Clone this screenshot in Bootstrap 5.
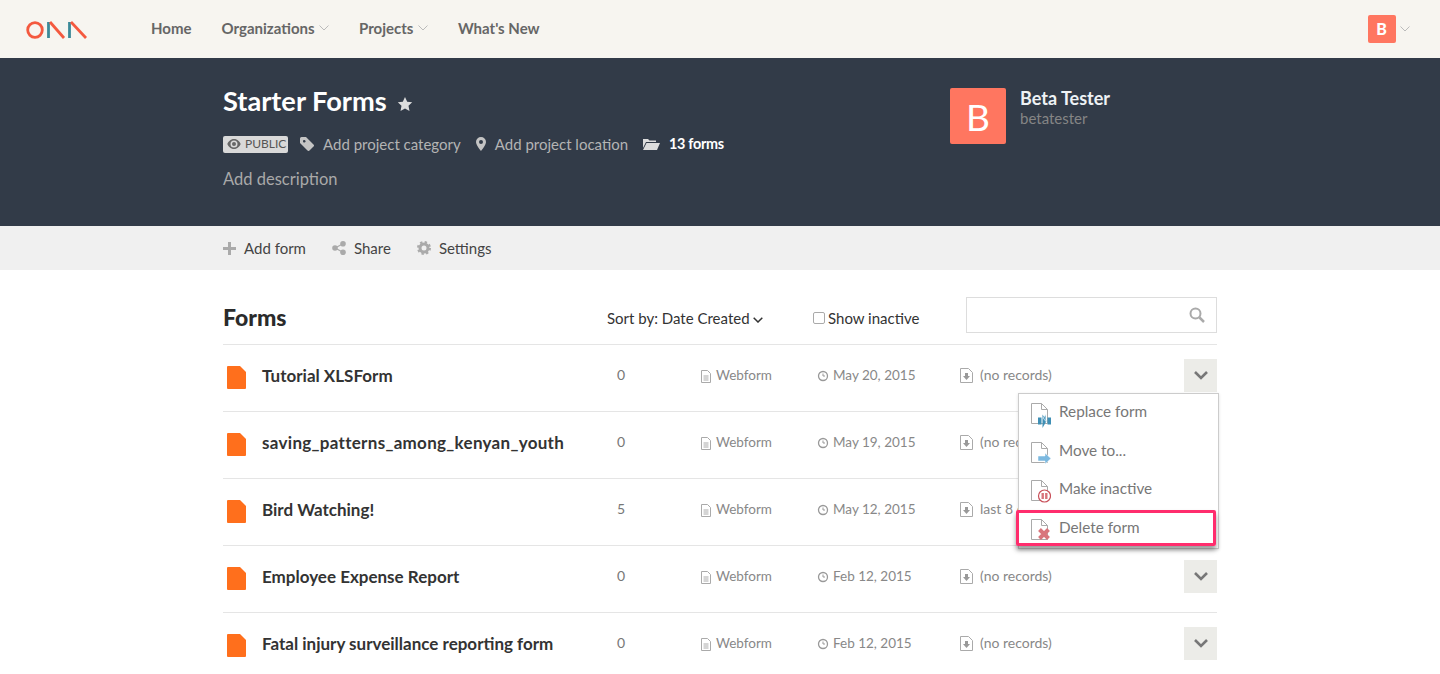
<!doctype html>
<html lang="en"><head><meta charset="utf-8"><title>Starter Forms</title>
<link href="https://cdn.jsdelivr.net/npm/bootstrap@5.3.0/dist/css/bootstrap.min.css" rel="stylesheet">
<style>
html,body{height:674px;overflow:hidden}
body{font-family:Lato,"Open Sans",sans-serif;font-size:15px;color:#333;background:#fff}
a{text-decoration:none;color:inherit}
.topbar{height:58px;background:#f7f5f0;padding:0 30px 0 26px}
.brandmark{width:62px;margin-right:63px;display:block}
.toplink{font-weight:700;font-size:15px;color:#666;margin-right:30px;padding-bottom:1px}
.caretsvg{margin-left:4.5px;vertical-align:3px}
.tinyavatar{width:28px;height:28px;background:#ff7660;color:#fff;font-weight:900;font-size:16px;border-radius:2px}
.hero{height:168px;background:#323b48}
.inner{width:994px;margin:0 auto}
.herotitle{font-size:27.2px;font-weight:700;color:#fff;line-height:32px;margin:0;padding-top:27px}
.herometa{margin-top:17px;font-size:15px;color:#b4b4b4;height:20px}
.pubtag{background:#d9d9d9;color:#555;font-size:12px;height:17px;width:65px;border-radius:2px;margin-right:12px;padding-left:4px}
.metaitem{margin-right:15px}
.metaitem svg{margin-right:9px}
.formcount{font-size:14.4px;letter-spacing:-.3px}
.herodesc{margin-top:13px;font-size:16.5px;color:#a9a9a9;line-height:24px}
.owner{width:267px;padding-top:30px}
.bigavatar{width:56px;height:56px;background:#ff7660;color:#fff;font-size:37px;border-radius:2px;margin-right:14px;line-height:1}
.ownername{font-size:18px;font-weight:700;color:#eef2f5;line-height:22px;margin-top:-1px}
.ownerhandle{font-size:15px;color:#858585;line-height:20px;margin-top:-1px}
.subbar{height:44px;background:#f0f0f0;font-size:15px;color:#444}
.subitem{margin-right:26px}
.subitem svg{margin-right:8px}
.formshead{height:75px;border-bottom:1px solid #e5e5e5;padding-top:16px}
.headtext{padding-top:6px}
.formstitle{font-size:23px;font-weight:900;color:#2b2b2b;margin:0;width:384px}
.sortby{width:206px;color:#333;font-size:15px}
.showin{width:153px;font-size:15px;color:#333}
.chk{width:12px;height:12px;border:1px solid #aaa;border-radius:2px;background:#fff;margin-right:3px;display:inline-block}
.searchbox{width:251px;height:36px;border:1px solid #ddd;padding-right:11px}
.formrow{height:67px;border-bottom:1px solid #e5e5e5;color:#888;font-size:13.5px;padding-bottom:4px}
.colname{width:394px;font-size:17px;font-weight:700;color:#333;padding-left:4px}
.colname svg{margin-right:16px;margin-top:2px}
.widename{letter-spacing:.3px}
.colcount{width:83px;color:#777;font-size:14px;padding-bottom:4px}
.coltype{width:117px;padding-bottom:2px}
.coldate{width:143px;padding-bottom:2px}
.colrec{width:224px;font-size:14px;padding-bottom:4px}
.coltype svg,.coldate svg,.colrec svg{margin-right:4px}
.colrec svg{margin-right:7px}
.rowbtn{width:33px;height:33px;background:#ecece8;margin-bottom:2px}
.listarea{position:relative}
.rowmenu{position:absolute;left:795px;top:48px;width:201px;height:156px;background:#fff;border:1px solid #ccc;box-shadow:0 1px 3px rgba(0,0,0,.12)}
.menuitem{height:38.5px;padding-left:11px;font-size:15.3px;color:#777}
.menuitem svg{margin-right:8px}
.menulabel{padding-bottom:3px}
.menuhot{position:absolute;left:-3px;top:116px;width:200px;height:36px;border:3px solid #ff2d6d;border-radius:2px;box-shadow:0 4px 5px rgba(0,0,0,.4)}
</style></head><body>
<nav class="topbar d-flex align-items-center">
<svg class="brandmark" width="62" height="20" viewBox="0 0 62 20" fill="none" stroke-width="2.8"><circle cx="9" cy="11" r="7.300" stroke="#f4593f"/><path d="M22.500 3v16" stroke="#3b8a98"/><path d="M24 3l14 16" stroke="#f4593f"/><path d="M43.500 19V3" stroke="#3b8a98"/><path d="M45 3l15 16" stroke="#f4593f"/></svg>
<a class="toplink" href="#">Home</a>
<a class="toplink" href="#">Organizations<svg class="caretsvg" width="10" height="6" viewBox="0 0 10 6" fill="none" stroke="#bbb"><path d="M.5.5l4.500 4.500 4.500-4.500"/></svg></a>
<a class="toplink" href="#">Projects<svg class="caretsvg" width="10" height="6" viewBox="0 0 10 6" fill="none" stroke="#bbb"><path d="M.5.5l4.500 4.500 4.500-4.500"/></svg></a>
<a class="toplink" href="#">What's New</a>
<div class="ms-auto d-flex align-items-center"><span class="tinyavatar d-flex align-items-center justify-content-center">B</span><svg class="caretsvg" width="10" height="6" viewBox="0 0 10 6" fill="none" stroke="#bbb"><path d="M.5.5l4.500 4.500 4.500-4.500"/></svg></div>
</nav>
<header class="hero"><div class="inner d-flex justify-content-between">
<div>
<h1 class="herotitle">Starter Forms <svg width="16" height="16" viewBox="0 0 16 16" fill="#ddd" class="ms-1"><path d="M8 1l2.200 4.700 5 .6-3.700 3.500 1 5.100L8 12.400 3.500 14.900l1-5.100L.8 6.300l5-.6z"/></svg></h1>
<div class="herometa d-flex align-items-center">
<span class="pubtag d-flex align-items-center"><svg width="14" height="10" viewBox="0 0 14 10" class="me-1"><path d="M7 0C3.500 0 1.200 2.800.3 5c.9 2.200 3.200 5 6.700 5s5.800-2.800 6.700-5C12.800 2.800 10.500 0 7 0zm0 8.500A3.500 3.500 0 1 1 7 1.500a3.500 3.500 0 0 1 0 7zM7 3a2 2 0 1 0 0 4 2 2 0 0 0 0-4z" fill="#666"/></svg>PUBLIC</span>
<span class="metaitem d-flex align-items-center"><svg width="14" height="14" viewBox="0 0 14 14" fill="#c4c4c4"><path d="M0 1.500A1.500 1.500 0 0 1 1.500 0H6l7.500 7.500a1.400 1.400 0 0 1 0 2L9.500 13.500a1.400 1.400 0 0 1-2 0L0 6zM3 4.300a1.300 1.300 0 1 0 0-.1z"/></svg>Add project category</span>
<span class="metaitem d-flex align-items-center"><svg width="10" height="14" viewBox="0 0 10 14" fill="#c4c4c4"><path d="M5 0a5 5 0 0 0-5 5c0 3 5 9 5 9s5-6 5-9a5 5 0 0 0-5-5zm0 7a2 2 0 1 1 0-4 2 2 0 0 1 0 4z"/></svg>Add project location</span>
<span class="metaitem formcount d-flex align-items-center text-white fw-bold"><svg width="17" height="12" viewBox="0 0 17 12" fill="#ddd"><path d="M0 1h5l1.500 1.500H13V4H3L0 10zM3.500 5H17l-3 7H0z"/></svg>13 forms</span>
</div>
<div class="herodesc">Add description</div>
</div>
<div class="owner d-flex"><span class="bigavatar d-flex align-items-center justify-content-center">B</span><div><div class="ownername">Beta Tester</div><div class="ownerhandle">betatester</div></div></div>
</div></header>
<div class="subbar"><div class="inner d-flex align-items-center h-100">
<a class="subitem d-flex align-items-center" href="#"><svg width="13" height="13" viewBox="0 0 13 13" fill="#aaa"><path d="M5 0h3v5h5v3H8v5H5V8H0V5h5z"/></svg>Add form</a>
<a class="subitem d-flex align-items-center" href="#"><svg width="14" height="14" viewBox="0 0 14 14"><g fill="#aaa"><circle cx="3" cy="7" r="2.800"/><circle cx="11" cy="2.800" r="2.800"/><circle cx="11" cy="11.200" r="2.800"/></g><path d="M3 7l8-4.200M3 7l8 4.200" stroke="#aaa" stroke-width="1.200"/></svg>Share</a>
<a class="subitem d-flex align-items-center" href="#"><svg width="14" height="14" viewBox="0 0 14 14" fill="none"><circle cx="7" cy="7" r="4" stroke="#aaa" stroke-width="3"/><circle cx="7" cy="7" r="5.800" stroke="#aaa" stroke-width="2.400" stroke-dasharray="2.300 2.250"/></svg>Settings</a>
</div></div>
<main class="inner">
<div class="formshead d-flex align-items-center">
<h2 class="formstitle headtext">Forms</h2>
<div class="sortby headtext">Sort by: Date Created <svg width="10" height="6" viewBox="0 0 10 6" fill="none" stroke="#333" stroke-width="1.500" class="ms-0"><path d="M.7.7L5 5l4.300-4.300"/></svg></div>
<div class="showin headtext d-flex align-items-center"><span class="chk"></span>Show inactive</div>
<div class="searchbox d-flex align-items-center justify-content-end"><svg width="16" height="16" viewBox="0 0 16 16" fill="none" stroke="#aaa" stroke-width="2"><circle cx="6.500" cy="6.500" r="5"/><path d="M10.500 10.500L15 15" stroke-width="2.500"/></svg></div>
</div>
<div class="listarea">
<div class="formrow d-flex align-items-center"><div class="colname d-flex align-items-center"><svg width="19" height="23" viewBox="0 0 19 23"><path d="M1 0h12l6 6v16a1 1 0 0 1-1 1H1a1 1 0 0 1-1-1V1a1 1 0 0 1 1-1z" fill="#ff6f1c"/></svg>Tutorial XLSForm</div><div class="colcount">0</div><div class="coltype"><svg width="12" height="13" viewBox="0 0 12 13" fill="none" stroke="#aaa"><path d="M1.500.5h6l3 3v9h-9zM3.500 6h5M3.500 8h5M3.500 10h5"/></svg>Webform</div><div class="coldate"><svg width="12" height="12" viewBox="0 0 12 12" fill="none" stroke="#999"><circle cx="6" cy="6" r="4.500" stroke-width="1.300"/><path d="M6 3.500V6h2"/></svg>May 20, 2015</div><div class="colrec"><svg width="13" height="15" viewBox="0 0 13 15" fill="none" stroke="#aaa"><path d="M.5.5h8l4 4v10H.5z"/><path d="M5 5h3v3h2l-3.500 4L3 8h2z" fill="#999" stroke="none"/></svg>(no records)</div><div class="rowbtn d-flex align-items-center justify-content-center"><svg width="14" height="9" viewBox="0 0 14 9" fill="none" stroke="#777" stroke-width="2.600"><path d="M1 1l6 6 6-6"/></svg></div></div>
<div class="formrow d-flex align-items-center"><div class="colname d-flex align-items-center"><svg width="19" height="23" viewBox="0 0 19 23"><path d="M1 0h12l6 6v16a1 1 0 0 1-1 1H1a1 1 0 0 1-1-1V1a1 1 0 0 1 1-1z" fill="#ff6f1c"/></svg><span class="widename">saving_patterns_among_kenyan_youth</span></div><div class="colcount">0</div><div class="coltype"><svg width="12" height="13" viewBox="0 0 12 13" fill="none" stroke="#aaa"><path d="M1.500.5h6l3 3v9h-9zM3.500 6h5M3.500 8h5M3.500 10h5"/></svg>Webform</div><div class="coldate"><svg width="12" height="12" viewBox="0 0 12 12" fill="none" stroke="#999"><circle cx="6" cy="6" r="4.500" stroke-width="1.300"/><path d="M6 3.500V6h2"/></svg>May 19, 2015</div><div class="colrec"><svg width="13" height="15" viewBox="0 0 13 15" fill="none" stroke="#aaa"><path d="M.5.5h8l4 4v10H.5z"/><path d="M5 5h3v3h2l-3.500 4L3 8h2z" fill="#999" stroke="none"/></svg>(no records)</div></div>
<div class="formrow d-flex align-items-center"><div class="colname d-flex align-items-center"><svg width="19" height="23" viewBox="0 0 19 23"><path d="M1 0h12l6 6v16a1 1 0 0 1-1 1H1a1 1 0 0 1-1-1V1a1 1 0 0 1 1-1z" fill="#ff6f1c"/></svg>Bird Watching!</div><div class="colcount">5</div><div class="coltype"><svg width="12" height="13" viewBox="0 0 12 13" fill="none" stroke="#aaa"><path d="M1.500.5h6l3 3v9h-9zM3.500 6h5M3.500 8h5M3.500 10h5"/></svg>Webform</div><div class="coldate"><svg width="12" height="12" viewBox="0 0 12 12" fill="none" stroke="#999"><circle cx="6" cy="6" r="4.500" stroke-width="1.300"/><path d="M6 3.500V6h2"/></svg>May 12, 2015</div><div class="colrec"><svg width="13" height="15" viewBox="0 0 13 15" fill="none" stroke="#aaa"><path d="M.5.5h8l4 4v10H.5z"/><path d="M5 5h3v3h2l-3.500 4L3 8h2z" fill="#999" stroke="none"/></svg>last 8 days</div></div>
<div class="formrow d-flex align-items-center"><div class="colname d-flex align-items-center"><svg width="19" height="23" viewBox="0 0 19 23"><path d="M1 0h12l6 6v16a1 1 0 0 1-1 1H1a1 1 0 0 1-1-1V1a1 1 0 0 1 1-1z" fill="#ff6f1c"/></svg>Employee Expense Report</div><div class="colcount">0</div><div class="coltype"><svg width="12" height="13" viewBox="0 0 12 13" fill="none" stroke="#aaa"><path d="M1.500.5h6l3 3v9h-9zM3.500 6h5M3.500 8h5M3.500 10h5"/></svg>Webform</div><div class="coldate"><svg width="12" height="12" viewBox="0 0 12 12" fill="none" stroke="#999"><circle cx="6" cy="6" r="4.500" stroke-width="1.300"/><path d="M6 3.500V6h2"/></svg>Feb 12, 2015</div><div class="colrec"><svg width="13" height="15" viewBox="0 0 13 15" fill="none" stroke="#aaa"><path d="M.5.5h8l4 4v10H.5z"/><path d="M5 5h3v3h2l-3.500 4L3 8h2z" fill="#999" stroke="none"/></svg>(no records)</div><div class="rowbtn d-flex align-items-center justify-content-center"><svg width="14" height="9" viewBox="0 0 14 9" fill="none" stroke="#777" stroke-width="2.600"><path d="M1 1l6 6 6-6"/></svg></div></div>
<div class="formrow d-flex align-items-center"><div class="colname d-flex align-items-center"><svg width="19" height="23" viewBox="0 0 19 23"><path d="M1 0h12l6 6v16a1 1 0 0 1-1 1H1a1 1 0 0 1-1-1V1a1 1 0 0 1 1-1z" fill="#ff6f1c"/></svg>Fatal injury surveillance reporting form</div><div class="colcount">0</div><div class="coltype"><svg width="12" height="13" viewBox="0 0 12 13" fill="none" stroke="#aaa"><path d="M1.500.5h6l3 3v9h-9zM3.500 6h5M3.500 8h5M3.500 10h5"/></svg>Webform</div><div class="coldate"><svg width="12" height="12" viewBox="0 0 12 12" fill="none" stroke="#999"><circle cx="6" cy="6" r="4.500" stroke-width="1.300"/><path d="M6 3.500V6h2"/></svg>Feb 12, 2015</div><div class="colrec"><svg width="13" height="15" viewBox="0 0 13 15" fill="none" stroke="#aaa"><path d="M.5.5h8l4 4v10H.5z"/><path d="M5 5h3v3h2l-3.500 4L3 8h2z" fill="#999" stroke="none"/></svg>(no records)</div><div class="rowbtn d-flex align-items-center justify-content-center"><svg width="14" height="9" viewBox="0 0 14 9" fill="none" stroke="#777" stroke-width="2.600"><path d="M1 1l6 6 6-6"/></svg></div></div>
<div class="rowmenu">
<div class="menuitem d-flex align-items-center"><svg width="21" height="30" viewBox="0 0 21 30" fill="none"><path d="M1.500 5.500h10l6 6v14H1.500zM11.500 5.500v6h6" stroke="#aaa" fill="#fff"/><path d="M8 19.500h3.500v7H8zM17.500 19.500H21v7h-3.500z" fill="#3f8fb5"/><path d="M12.500 16.500L16.500 23l-4 7z" fill="#3f8fb5"/><path d="M16 16.500v7l-3-3.500z" fill="#5fa5c8" stroke="#fff" stroke-width=".6"/></svg><span class="menulabel">Replace form</span></div>
<div class="menuitem d-flex align-items-center"><svg width="21" height="30" viewBox="0 0 21 30" fill="none"><path d="M1.500 5.500h10l6 6v14H1.500zM11.500 5.500v6h6" stroke="#aaa" fill="#fff"/><path d="M8 19h7v-3l6 5.500-6 5.500v-3H8z" fill="#7cb9e0" stroke="#fff" stroke-width=".5"/></svg><span class="menulabel">Move to...</span></div>
<div class="menuitem d-flex align-items-center"><svg width="21" height="30" viewBox="0 0 21 30" fill="none"><path d="M1.500 5.500h10l6 6v14H1.500zM11.500 5.500v6h6" stroke="#aaa" fill="#fff"/><circle cx="14.500" cy="21" r="6" fill="#fff" stroke="#c9505a" stroke-width="1.200"/><path d="M12.700 18v6M16.300 18v6" stroke="#d8747c" stroke-width="2.400"/></svg><span class="menulabel">Make inactive</span></div>
<div class="menuitem d-flex align-items-center"><svg width="21" height="30" viewBox="0 0 21 30" fill="none"><path d="M1.500 5.500h10l6 6v14H1.500zM11.500 5.500v6h6" stroke="#aaa" fill="#fff"/><path d="M9.500 15.500l9 9M18.500 15.500l-9 9" stroke="#d9757c" stroke-width="4"/></svg><span class="menulabel">Delete form</span></div>
<div class="menuhot"></div>
</div>
</div>
</main>
</body></html>
